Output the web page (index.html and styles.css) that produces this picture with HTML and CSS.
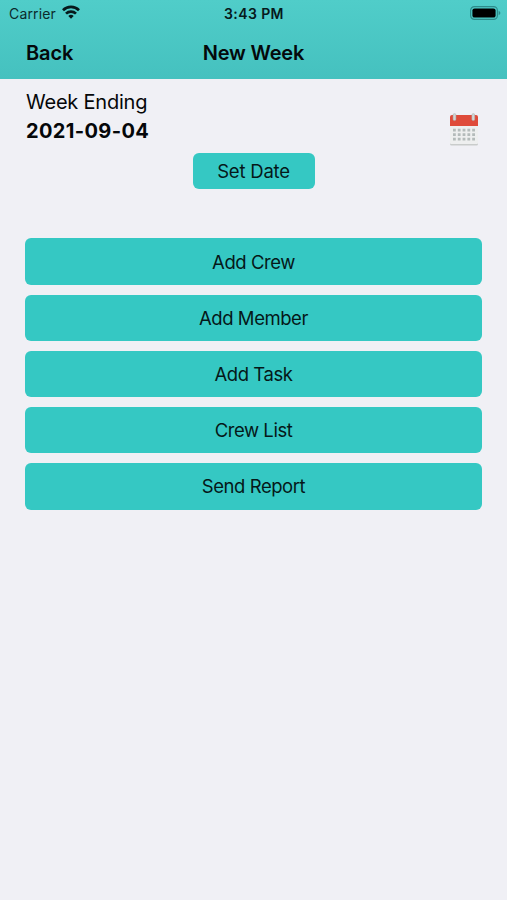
FILE: index.html
```html
<!DOCTYPE html>
<html lang="en">
<head>
<meta charset="utf-8">
<title>New Week</title>
<link rel="stylesheet" href="styles.css">
</head>
<body>
<header class="header">
  <div class="status">
    <div class="carrier"><span>Carrier</span>
      <svg class="wifi" width="18" height="14" viewBox="0 0 18 14" fill="none" stroke="#06191b" stroke-width="2.7"><path d="M1 5.2a11.4 11.4 0 0 1 16 0M4 8.6a7.1 7.1 0 0 1 10 0"/><path d="M9 13.8 6.3 11.1a3.8 3.8 0 0 1 5.4 0Z" fill="#06191b" stroke="none"/></svg>
    </div>
    <time class="clock">3:43 PM</time>
    <svg class="battery" width="31" height="14" viewBox="0 0 31 14"><rect x=".6" y=".6" width="26.8" height="12.8" rx="3.8" fill="none" stroke="#2d8c8b" stroke-width="1.2"/><rect x="2.4" y="2.4" width="23.2" height="9.2" rx="2.2"/><path d="M28.6 4.7q1.8.8 1.8 2.3t-1.8 2.3z" fill="#2d8c8b"/></svg>
  </div>
  <nav class="nav">
    <a class="back">Back</a>
    <h1 class="title">New Week</h1>
  </nav>
</header>
<main class="content">
  <section class="week">
    <div>
      <div class="label">Week Ending</div>
      <div class="date">2021-09-04</div>
    </div>
    <svg class="calendar" width="30" height="34" viewBox="0 0 30 34">
      <rect x="1" y="28.5" width="28" height="4" rx="1.5" fill="#c9cccb"/>
      <path d="M1 12h28v18q0 1-1 1H2q-1 0-1-1z" fill="#eeefef"/>
      <path d="M3 2h24q2 0 2 2v9H1V4q0-2 2-2z" fill="#df4b3a"/>
      <g fill="#d2d6d5" stroke="#a9b1b1" stroke-width=".5"><rect x="4.1" y=".6" width="2.8" height="7" rx="1.4"/><rect x="22.9" y=".6" width="2.8" height="7" rx="1.4"/></g>
      <path d="M4 17.2h22M4 21.7h22M4 26.2h22" stroke="#b4bbba" stroke-width="2.8" stroke-dasharray="2.8 2"/>
    </svg>
  </section>
  <button class="button set-date">Set Date</button>
  <div class="actions">
    <button class="button">Add Crew</button>
    <button class="button">Add Member</button>
    <button class="button">Add Task</button>
    <button class="button">Crew List</button>
    <button class="button">Send Report</button>
  </div>
</main>
</body>
</html>
```

FILE: styles.css
```css
* { box-sizing: border-box; }
body {
  margin: 0;
  min-height: 900px;
  background: #f0f0f5;
  color: #050709;
  font-family: Inter, "Liberation Sans", sans-serif;
}
.header {
  height: 79px;
  background: linear-gradient(#50cdc9, #45c1bf);
}
.status {
  display: grid;
  grid-template-columns: 1fr auto 1fr;
  align-items: center;
  height: 27px;
  padding: 0 6px 0 8px;
  font-size: 14px;
  color: #0b2a2c;
}
.carrier { display: flex; align-items: center; gap: 6px; padding-left: 1px; letter-spacing: .15px; }
.wifi { margin-top: -3px; }
.clock { font-weight: 600; color: #06191b; letter-spacing: .4px; margin-right: 1px; }
.battery { justify-self: end; margin-top: -1px; }
.nav {
  display: grid;
  grid-template-columns: 1fr auto 1fr;
  align-items: center;
  height: 51px;
  padding: 0 26px;
  color: #04090b;
}
.back { font-size: 20px; font-weight: 600; letter-spacing: -.1px; }
.title { margin: 0; font-size: 20px; font-weight: 600; letter-spacing: -.2px; }
.content { padding: 9px 25px 0; }
.week {
  display: flex;
  justify-content: space-between;
  padding: 0 3px 0 1px;
  font-size: 20px;
  line-height: 29px;
}
.label { letter-spacing: -.22px; }
.date { font-weight: 700; letter-spacing: .37px; }
.calendar { margin-top: 25px; }
.button {
  display: block;
  width: 100%;
  height: 46.4px;
  padding: 0;
  border: 0;
  border-radius: 6px;
  background: #35c8c3;
  color: #051819;
  font: 400 18.5px Inter, "Liberation Sans", sans-serif;
  letter-spacing: -.45px;
}
.set-date { width: 122px; height: 36.4px; margin: 6px auto 0; letter-spacing: -.2px; }
.actions {
  display: flex;
  flex-direction: column;
  gap: 9.8px;
  margin-top: 49px;
}
```
